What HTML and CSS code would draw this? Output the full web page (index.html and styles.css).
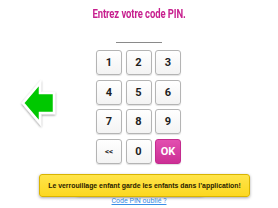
FILE: index.html
```html
<!DOCTYPE html>
<html>
<head>
<meta charset="utf-8">
<link rel="stylesheet" href="styles.css">
</head>
<body>
<div class="screen">
  <h1 class="title"><span class="title-text">Entrez votre code PIN.</span></h1>
  <div class="pin-field"></div>
  <div class="main">
    <div class="side">
      <svg class="back" width="42" height="52" viewBox="0 0 42 52">
        <defs>
          <filter id="sh" x="-30%" y="-30%" width="160%" height="160%">
            <feGaussianBlur in="SourceAlpha" stdDeviation="1.2"/>
            <feOffset dx="0" dy="0.5" result="b"/>
            <feComponentTransfer><feFuncA type="linear" slope="0.45"/></feComponentTransfer>
            <feMerge><feMergeNode/><feMergeNode in="SourceGraphic"/></feMerge>
          </filter>
        </defs>
        <polygon filter="url(#sh)" points="5,25 22,5 22,15 36,15 36,35 22,35 22,45" fill="#00c800" stroke="#ffffff" stroke-width="2.5" stroke-linejoin="miter"/>
      </svg>
    </div>
    <div class="keypad">
      <button class="key">1</button>
      <button class="key">2</button>
      <button class="key">3</button>
      <button class="key">4</button>
      <button class="key">5</button>
      <button class="key">6</button>
      <button class="key">7</button>
      <button class="key">8</button>
      <button class="key">9</button>
      <button class="key key-small">&lt;&lt;</button>
      <button class="key">0</button>
      <button class="key key-ok">OK</button>
    </div>
    <div class="side"></div>
  </div>
  <div class="forgot"><span class="forgot-shade"></span><a class="forgot-link">Code PIN oublié ?</a></div>
  <div class="toast">Le verrouillage enfant garde les enfants dans l’application!</div>
</div>
</body>
</html>
```
FILE: styles.css
```css
html, body {
  margin: 0;
  padding: 0;
  background: #ffffff;
}
.screen {
  position: relative;
  width: 278px;
  height: 208px;
  overflow: hidden;
  font-family: Roboto, "Liberation Sans", sans-serif;
}
.title {
  margin: 0;
  padding-top: 6px;
  height: 17px;
  line-height: 17px;
  text-align: center;
  font-size: 12px;
  font-weight: 700;
  color: #c71f8e;
}
.title-text {
  display: inline-block;
  transform: scaleX(0.79);
  letter-spacing: -0.1px;
}
.pin-field {
  width: 46px;
  height: 19px;
  margin: 0 0 0 116px;
  border-bottom: 1px solid #8a8a8a;
}
.main {
  display: grid;
  grid-template-columns: 96px auto 1fr;
  margin-top: 7px;
}
.side {
  display: flex;
  align-items: flex-start;
}
.back {
  display: block;
  margin-left: 18px;
  margin-top: 28px;
}
.keypad {
  display: grid;
  grid-template-columns: repeat(3, 26px);
  grid-auto-rows: 25px;
  column-gap: 3.5px;
  row-gap: 4.7px;
}
.key {
  margin: 0;
  padding: 0;
  border: 1px solid #b4b4b4;
  border-radius: 3px;
  background: linear-gradient(#ffffff, #f3f3f3);
  box-shadow: 0 1px 1px rgba(0,0,0,0.12);
  font-family: Roboto, "Liberation Sans", sans-serif;
  font-weight: 700;
  font-size: 11px;
  color: #1e1e1e;
  display: flex;
  align-items: center;
  justify-content: center;
}
.key-small {
  font-size: 8px;
}
.key-ok {
  border-color: #c42b8e;
  background: linear-gradient(#e24fb0, #cc2f95);
  color: #ffffff;
  font-size: 11px;
}
.forgot {
  position: relative;
  margin-top: 29px;
  text-align: center;
  height: 9px;
  line-height: 9px;
}
.forgot-shade {
  position: absolute;
  left: 77px;
  top: -6px;
  width: 126px;
  height: 9px;
  background: rgba(70,70,70,0.75);
  filter: blur(1.5px);
}
.forgot-link {
  position: relative;
  font-size: 7px;
  color: #3a8ee6;
  text-decoration: underline;
}
.toast {
  position: absolute;
  left: 39px;
  top: 174px;
  width: 211px;
  height: 23px;
  box-sizing: border-box;
  border: 1px solid #d9b400;
  border-radius: 3px;
  background: linear-gradient(#ffe44a, #fcd820);
  box-shadow: 0 1px 3px rgba(0,0,0,0.35);
  font-family: "Liberation Sans", Arial, sans-serif;
  font-weight: 700;
  font-size: 6.9px;
  line-height: 21px;
  text-align: center;
  color: #2a2200;
  white-space: nowrap;
}
```
